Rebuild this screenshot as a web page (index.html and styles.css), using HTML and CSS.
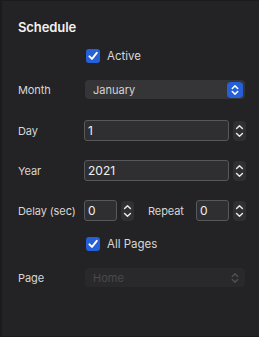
FILE: index.html
```html
<!DOCTYPE html>
<html>
<head>
<meta charset="utf-8">
<link rel="stylesheet" href="styles.css">
</head>
<body>
<div class="panel">
  <div class="title">Schedule</div>
  <div class="form">
    <div class="row check-row">
      <span></span>
      <label class="check"><span class="box"><svg viewBox="0 0 14 14" width="14" height="14"><path d="M3.4 7.3 L6 9.9 L10.8 3.8" fill="none" stroke="#fff" stroke-width="1.9" stroke-linecap="round" stroke-linejoin="round"/></svg></span>Active</label>
    </div>
    <div class="row sel-row">
      <span class="lbl">Month</span>
      <div class="select">
        <span>January</span>
        <span class="sel-btn"><svg viewBox="0 0 16 16" width="16" height="16"><path d="M5.3 6.5 L8 3.9 L10.7 6.5 M5.3 9.5 L8 12.1 L10.7 9.5" fill="none" stroke="#fff" stroke-width="1.5" stroke-linecap="round" stroke-linejoin="round"/></svg></span>
      </div>
    </div>
    <div class="row num-row first">
      <span class="lbl">Day</span>
      <div class="numfield">
        <div class="input wide">1</div>
        <span class="stepper"><svg viewBox="0 0 13 20" width="13" height="20"><path d="M3.6 7.5 L6.5 4.8 L9.4 7.5 M3.6 12.5 L6.5 15.2 L9.4 12.5" fill="none" stroke="#e8e8e8" stroke-width="1.5" stroke-linecap="round" stroke-linejoin="round"/></svg></span>
      </div>
    </div>
    <div class="row num-row">
      <span class="lbl">Year</span>
      <div class="numfield">
        <div class="input wide">2021</div>
        <span class="stepper"><svg viewBox="0 0 13 20" width="13" height="20"><path d="M3.6 7.5 L6.5 4.8 L9.4 7.5 M3.6 12.5 L6.5 15.2 L9.4 12.5" fill="none" stroke="#e8e8e8" stroke-width="1.5" stroke-linecap="round" stroke-linejoin="round"/></svg></span>
      </div>
    </div>
    <div class="row num-row">
      <span class="lbl">Delay (sec)</span>
      <div class="pair">
        <div class="numfield">
          <div class="input small">0</div>
          <span class="stepper"><svg viewBox="0 0 13 20" width="13" height="20"><path d="M3.6 7.5 L6.5 4.8 L9.4 7.5 M3.6 12.5 L6.5 15.2 L9.4 12.5" fill="none" stroke="#e8e8e8" stroke-width="1.5" stroke-linecap="round" stroke-linejoin="round"/></svg></span>
        </div>
        <span class="lbl repeat">Repeat</span>
        <div class="numfield">
          <div class="input small">0</div>
          <span class="stepper"><svg viewBox="0 0 13 20" width="13" height="20"><path d="M3.6 7.5 L6.5 4.8 L9.4 7.5 M3.6 12.5 L6.5 15.2 L9.4 12.5" fill="none" stroke="#e8e8e8" stroke-width="1.5" stroke-linecap="round" stroke-linejoin="round"/></svg></span>
        </div>
      </div>
    </div>
    <div class="row check-row2">
      <span></span>
      <label class="check"><span class="box"><svg viewBox="0 0 14 14" width="14" height="14"><path d="M3.4 7.3 L6 9.9 L10.8 3.8" fill="none" stroke="#fff" stroke-width="1.9" stroke-linecap="round" stroke-linejoin="round"/></svg></span>All Pages</label>
    </div>
    <div class="row sel-row2">
      <span class="lbl">Page</span>
      <div class="select disabled">
        <span>Home</span>
        <span class="sel-btn off"><svg viewBox="0 0 16 16" width="16" height="16"><path d="M5.3 6.5 L8 3.9 L10.7 6.5 M5.3 9.5 L8 12.1 L10.7 9.5" fill="none" stroke="#4e4e50" stroke-width="1.5" stroke-linecap="round" stroke-linejoin="round"/></svg></span>
      </div>
    </div>
  </div>
</div>
</body>
</html>
```
FILE: styles.css
```css
html, body {
  margin: 0;
  padding: 0;
  background: #232325;
}
body {
  width: 259px;
  height: 337px;
  overflow: hidden;
  font-family: Inter, "Liberation Sans", sans-serif;
  font-size: 11px;
  color: #d6d6d6;
}
.panel {
  box-sizing: border-box;
  width: 259px;
  height: 337px;
  border-left: 2px solid #1b1b1d;
  border-top: 1px solid #1b1b1d;
  border-bottom: 1px solid #1b1b1d;
  padding: 18px 0 0 16px;
}
.title {
  font-size: 13px;
  font-weight: 600;
  color: #f2f2f2;
  line-height: 16px;
  letter-spacing: -0.1px;
}
.form {
  display: flex;
  flex-direction: column;
}
.row {
  display: grid;
  grid-template-columns: 66px 1fr;
  align-items: center;
}
.lbl {
  line-height: 14px;
  letter-spacing: -0.1px;
}
.check-row { margin-top: 13px; height: 16px; }
.check {
  display: flex;
  align-items: center;
  gap: 7px;
  padding-left: 2px;
  font-size: 11.5px;
}
.box {
  width: 14px;
  height: 14px;
  border-radius: 3px;
  background: #2660d9;
  display: flex;
}
.sel-row { margin-top: 16px; height: 19px; }
.select {
  margin-left: 1px;
  width: 160px;
  height: 19px;
  box-sizing: border-box;
  border-radius: 4px;
  background: #353537;
  display: flex;
  align-items: center;
  justify-content: space-between;
  padding: 0 2px 0 8px;
  font-size: 11px;
  color: #d4d4d4;
}
.sel-btn {
  width: 16px;
  height: 16px;
  border-radius: 4px;
  background: #2660d9;
  display: flex;
}
.sel-btn.off { background: transparent; }
.select.disabled {
  background: #29292b;
  color: #4a4a4c;
}
.num-row { height: 21px; margin-top: 19px; }
.num-row.first { margin-top: 21px; }
.numfield {
  display: flex;
  align-items: center;
  gap: 4px;
}
.input {
  box-sizing: border-box;
  height: 21px;
  border: 1px solid #58585a;
  border-radius: 3px;
  background: #2f2f31;
  color: #f0f0f0;
  font-size: 12px;
  line-height: 19px;
  padding-left: 3px;
}
.input.wide { width: 145px; }
.input.small { width: 33px; }
.stepper {
  width: 13px;
  height: 20px;
  border-radius: 4px;
  background: #303032;
  display: flex;
}
.pair {
  display: flex;
  align-items: center;
}
.repeat { margin-left: 14px; width: 48px; }
.check-row2 { margin-top: 15px; height: 16px; }
.sel-row2 { margin-top: 16px; height: 19px; }
```
